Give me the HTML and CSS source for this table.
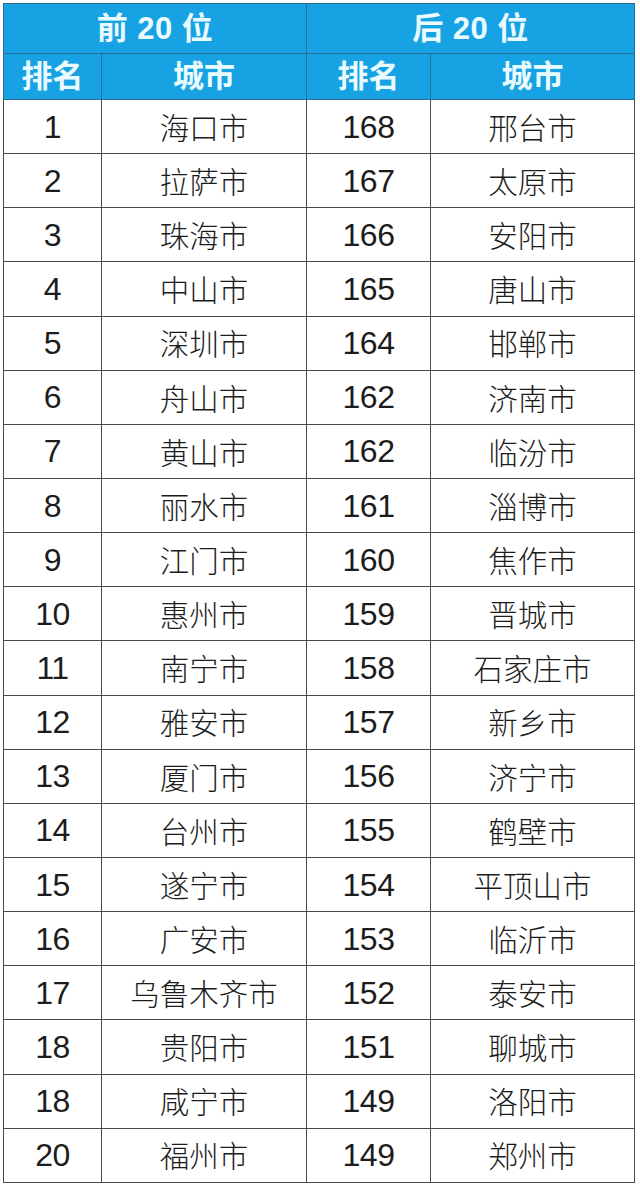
FILE: index.html
```html
<!DOCTYPE html>
<html lang="zh-CN">
<head>
<meta charset="utf-8">
<title>城市排名</title>
<link rel="stylesheet" href="styles.css">
</head>
<body>
<div class="page">
<table class="rank">
  <colgroup>
    <col class="c-rank">
    <col class="c-city">
    <col class="c-rank2">
    <col class="c-city2">
  </colgroup>
  <thead>
    <tr class="h1">
      <th colspan="2">前 20 位</th>
      <th colspan="2">后 20 位</th>
    </tr>
    <tr class="h2">
      <th>排名</th><th>城市</th><th>排名</th><th>城市</th>
    </tr>
  </thead>
  <tbody>
    <tr><td class="n">1</td><td class="c">海口市</td><td class="n">168</td><td class="c">邢台市</td></tr>
    <tr><td class="n">2</td><td class="c">拉萨市</td><td class="n">167</td><td class="c">太原市</td></tr>
    <tr><td class="n">3</td><td class="c">珠海市</td><td class="n">166</td><td class="c">安阳市</td></tr>
    <tr><td class="n">4</td><td class="c">中山市</td><td class="n">165</td><td class="c">唐山市</td></tr>
    <tr><td class="n">5</td><td class="c">深圳市</td><td class="n">164</td><td class="c">邯郸市</td></tr>
    <tr><td class="n">6</td><td class="c">舟山市</td><td class="n">162</td><td class="c">济南市</td></tr>
    <tr><td class="n">7</td><td class="c">黄山市</td><td class="n">162</td><td class="c">临汾市</td></tr>
    <tr><td class="n">8</td><td class="c">丽水市</td><td class="n">161</td><td class="c">淄博市</td></tr>
    <tr><td class="n">9</td><td class="c">江门市</td><td class="n">160</td><td class="c">焦作市</td></tr>
    <tr><td class="n">10</td><td class="c">惠州市</td><td class="n">159</td><td class="c">晋城市</td></tr>
    <tr><td class="n">11</td><td class="c">南宁市</td><td class="n">158</td><td class="c">石家庄市</td></tr>
    <tr><td class="n">12</td><td class="c">雅安市</td><td class="n">157</td><td class="c">新乡市</td></tr>
    <tr><td class="n">13</td><td class="c">厦门市</td><td class="n">156</td><td class="c">济宁市</td></tr>
    <tr><td class="n">14</td><td class="c">台州市</td><td class="n">155</td><td class="c">鹤壁市</td></tr>
    <tr><td class="n">15</td><td class="c">遂宁市</td><td class="n">154</td><td class="c">平顶山市</td></tr>
    <tr><td class="n">16</td><td class="c">广安市</td><td class="n">153</td><td class="c">临沂市</td></tr>
    <tr><td class="n">17</td><td class="c">乌鲁木齐市</td><td class="n">152</td><td class="c">泰安市</td></tr>
    <tr><td class="n">18</td><td class="c">贵阳市</td><td class="n">151</td><td class="c">聊城市</td></tr>
    <tr><td class="n">18</td><td class="c">咸宁市</td><td class="n">149</td><td class="c">洛阳市</td></tr>
    <tr><td class="n">20</td><td class="c">福州市</td><td class="n">149</td><td class="c">郑州市</td></tr>
  </tbody>
</table>
</div>
</body>
</html>
```
FILE: styles.css
```css
html, body {
  margin: 0;
  padding: 0;
  background: #ffffff;
}

.page {
  padding: 3px 0 0 3px;
}

.rank {
  border-collapse: collapse;
  width: 631px;
  table-layout: fixed;
  font-family: "Liberation Sans", "Noto Sans CJK SC", sans-serif;
  color: #1c1c1c;
}

.c-rank { width: 98px; }
.c-city { width: 205px; }
.c-rank2 { width: 124px; }
.c-city2 { width: 204px; }

.rank th,
.rank td {
  border: 1px solid #4a4a4a;
  padding: 0;
  text-align: center;
  vertical-align: middle;
  line-height: 1;
}

.rank th {
  background: #17a3e3;
  color: #eafbff;
  font-weight: 700;
  border-color: #2a6f96;
}

.h1 th {
  height: 49px;
  font-size: 31px;
  letter-spacing: 0.5px;
}

.h2 th {
  height: 45px;
  font-size: 31px;
}

.rank td {
  height: 53.15px;
}

.n {
  font-size: 32px;
  font-weight: 400;
  letter-spacing: -0.5px;
}

.c {
  font-family: "Noto Sans CJK SC", "Liberation Sans", sans-serif;
  font-size: 29.5px;
  font-weight: 300;
}
```
